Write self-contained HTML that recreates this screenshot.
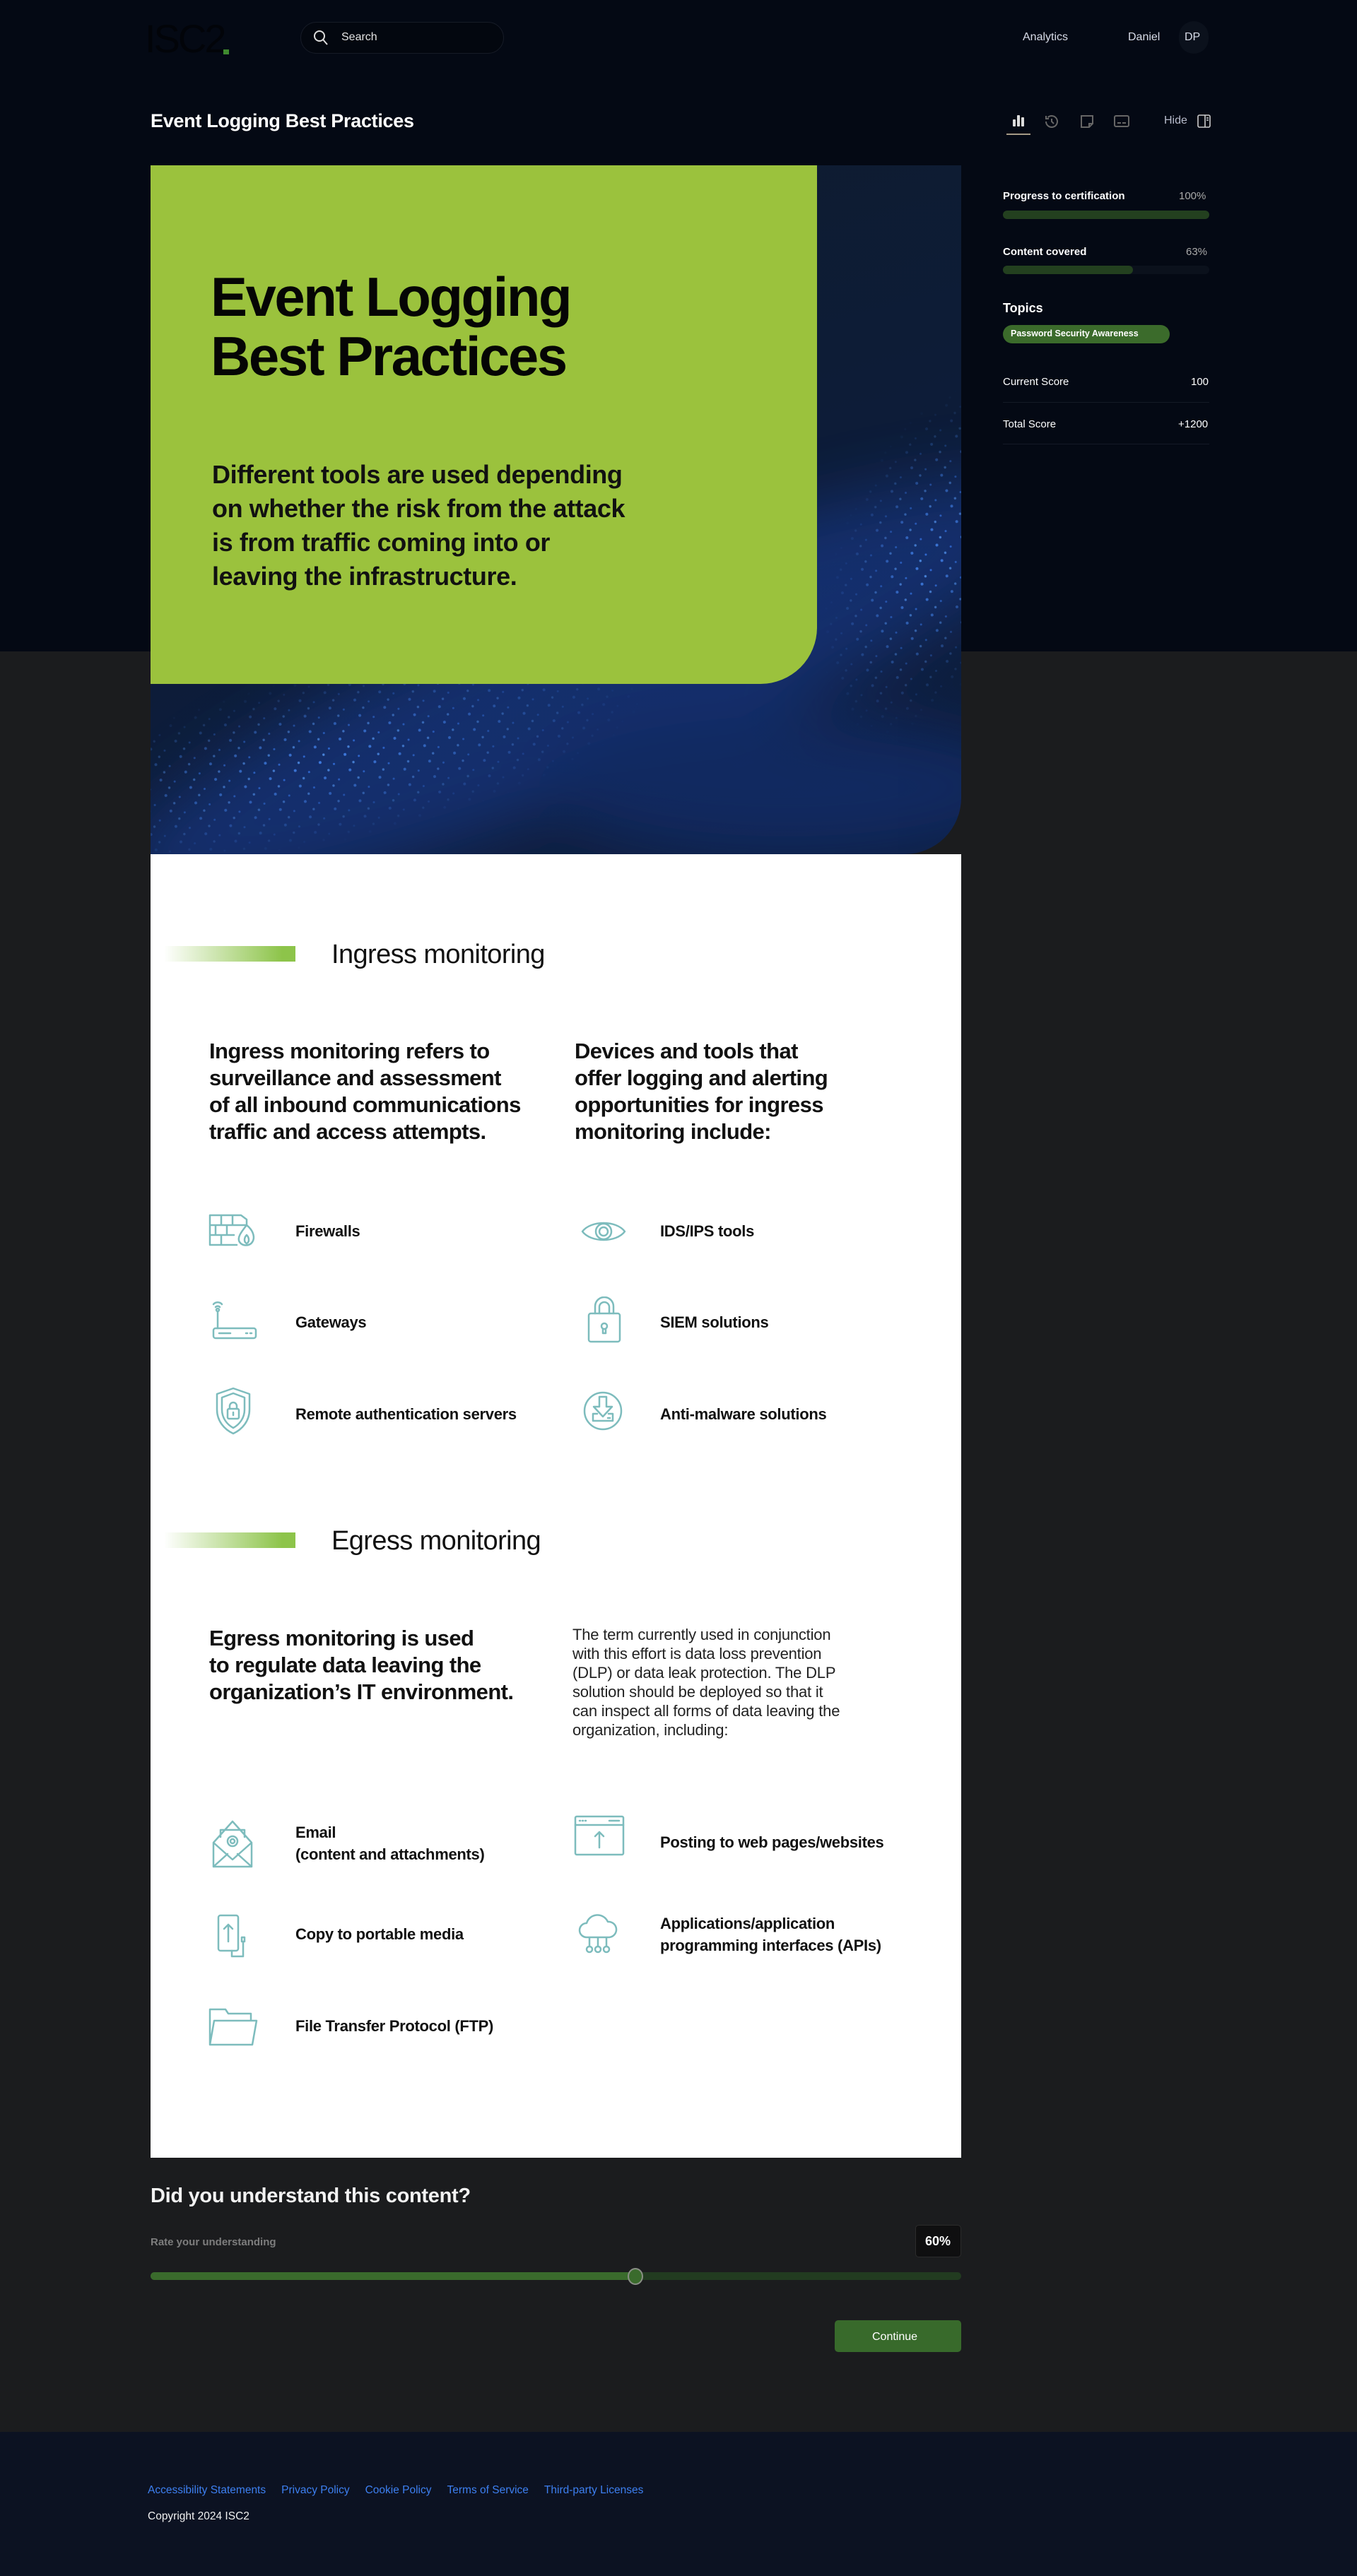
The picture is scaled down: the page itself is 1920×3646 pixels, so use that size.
<!DOCTYPE html>
<html><head><meta charset="utf-8">
<style>
*{margin:0;padding:0;box-sizing:border-box}
body{width:1920px;height:3646px;background:#1b1c1e;font-family:"Liberation Sans",sans-serif;position:relative;overflow:hidden}
.abs{position:absolute}
.top{left:0;top:0;width:1920px;height:922px;background:#040914}
.foot{left:0;top:3442px;width:1920px;height:204px;background:#0c1222}
.t{position:absolute;white-space:nowrap}
.ic{position:absolute;stroke:#7dbcbd;fill:none;stroke-width:2.5;stroke-linecap:round;stroke-linejoin:round}
.lab{position:absolute;font-weight:bold;font-size:22px;color:#111;letter-spacing:-0.3px;line-height:31px}
.para{position:absolute;font-weight:bold;font-size:31px;color:#111;line-height:38px;letter-spacing:-0.6px}
.h2{position:absolute;font-size:38px;color:#111;letter-spacing:-0.6px}
.bar{position:absolute;height:22px;width:186px;background:linear-gradient(90deg,rgba(141,196,74,0),#8dc44a 90%)}
.sb{color:#fff;font-size:15px;font-weight:bold}
</style></head><body>
<div class="abs top"></div>
<div class="abs foot"></div>

<div class="t" style="left:205px;top:22px;font-size:56px;color:#020409;letter-spacing:-3px">ISC2</div>
<div class="abs" style="left:316px;top:70px;width:8px;height:7px;background:#3f8a2f"></div>
<div class="abs" style="left:425px;top:31px;width:288px;height:45px;border:1px solid #161b26;border-radius:23px;background:#03070f"></div>
<svg class="abs" style="left:442px;top:41px" width="24" height="26" viewBox="0 0 24 26"><circle cx="10" cy="10" r="7" stroke="#ddd" stroke-width="2" fill="none"/><line x1="15" y1="15" x2="21" y2="22" stroke="#ddd" stroke-width="2"/></svg>
<div class="t" style="left:483px;top:44px;font-size:16px;color:#e3e3e3">Search</div>
<div class="t" style="left:1447px;top:44px;font-size:16px;color:#d8dce8">Analytics</div>
<div class="t" style="left:1596px;top:44px;font-size:16px;color:#d8dce8">Daniel</div>
<div class="abs" style="left:1668px;top:30px;width:42px;height:46px;border-radius:21px;background:#0b111c"></div>
<div class="t" style="left:1676px;top:44px;font-size:16px;color:#d8dce8">DP</div>

<div class="t" style="left:213px;top:156px;font-size:27px;font-weight:bold;color:#fff;letter-spacing:-0.3px">Event Logging Best Practices</div>
<svg class="abs" style="left:1430px;top:158px" width="22" height="26"><rect x="3" y="11" width="4" height="10" rx="1" fill="#ddd"/><rect x="9" y="5" width="4" height="16" rx="1" fill="#ddd"/><rect x="15" y="8" width="4" height="13" rx="1" fill="#ddd"/></svg>
<div class="abs" style="left:1424px;top:189px;width:34px;height:2px;background:#a59a86"></div>
<svg class="abs" style="left:1476px;top:160px" width="24" height="24" fill="none" stroke="#666" stroke-width="2"><path d="M4 12a8 8 0 1 0 2.5-5.8M4 4v4h4M12 8v4l3 3"/></svg>
<svg class="abs" style="left:1527px;top:161px" width="22" height="22" fill="none" stroke="#666" stroke-width="2"><path d="M3 3h16v11l-5 5H3z M14 19v-5h5"/></svg>
<svg class="abs" style="left:1575px;top:162px" width="24" height="20" fill="none" stroke="#666" stroke-width="2"><rect x="2" y="2" width="20" height="15" rx="2"/><path d="M6 12h5M13 12h5"/></svg>
<div class="t" style="left:1647px;top:162px;font-size:16px;color:#b8bccc">Hide</div>
<svg class="abs" style="left:1693px;top:161px" width="22" height="22" fill="none" stroke="#ccc" stroke-width="1.6"><rect x="2" y="2" width="17" height="17" rx="2"/><path d="M12 2v17M14 6h3M14 9h3"/></svg>

<div class="t sb" style="left:1419px;top:269px">Progress to certification</div>
<div class="t" style="left:1668px;top:269px;font-size:15px;color:#aaa">100%</div>
<div class="abs" style="left:1419px;top:298px;width:292px;height:12px;border-radius:6px;background:#23401f"></div>
<div class="t sb" style="left:1419px;top:348px">Content covered</div>
<div class="t" style="left:1678px;top:348px;font-size:15px;color:#aaa">63%</div>
<div class="abs" style="left:1419px;top:376px;width:292px;height:12px;border-radius:6px;background:#0b111c"></div>
<div class="abs" style="left:1419px;top:376px;width:184px;height:12px;border-radius:6px;background:#23401f"></div>
<div class="t" style="left:1419px;top:426px;font-size:18px;font-weight:bold;color:#fff">Topics</div>
<div class="abs" style="left:1419px;top:460px;width:236px;height:26px;border-radius:13px;background:#3b6b2b"></div>
<div class="t" style="left:1430px;top:465px;font-size:12.5px;font-weight:bold;color:#fff">Password Security Awareness</div>
<div class="t" style="left:1419px;top:532px;font-size:15px;color:#fff">Current Score</div>
<div class="t" style="left:1685px;top:532px;font-size:15px;color:#fff">100</div>
<div class="abs" style="left:1419px;top:569px;width:292px;height:1px;background:#141a26"></div>
<div class="t" style="left:1419px;top:592px;font-size:15px;color:#fff">Total Score</div>
<div class="t" style="left:1667px;top:592px;font-size:15px;color:#fff">+1200</div>
<div class="abs" style="left:1419px;top:628px;width:292px;height:1px;background:#141a26"></div>

<div class="abs" style="left:213px;top:234px;width:1147px;height:975px;border-bottom-right-radius:80px;overflow:hidden;background:linear-gradient(165deg,#0e1b2e 0%,#0d1c38 50%,#0e1e3f 100%)">
<svg width="1147" height="975" style="position:absolute;left:0;top:0">
<defs>
<filter id="bl"><feGaussianBlur stdDeviation="45"/></filter>
<pattern id="dots" width="37" height="23" patternUnits="userSpaceOnUse" patternTransform="rotate(-18)">
<circle cx="4" cy="4" r="2" fill="#4a90ff"/><circle cx="22" cy="12" r="1.5" fill="#3a7ef5"/><circle cx="12" cy="18" r="1.7" fill="#5aa0ff"/>
</pattern>
<radialGradient id="mg"><stop offset="0" stop-color="#fff" stop-opacity=".8"/><stop offset="1" stop-color="#fff" stop-opacity="0"/></radialGradient>
<mask id="m1"><ellipse cx="250" cy="840" rx="460" ry="120" transform="rotate(-12 250 840)" fill="url(#mg)"/><ellipse cx="1100" cy="560" rx="130" ry="260" transform="rotate(20 1100 560)" fill="url(#mg)"/></mask>
</defs>
<g filter="url(#bl)" opacity=".45">
<ellipse cx="620" cy="740" rx="720" ry="140" transform="rotate(-22 620 740)" fill="#1c44a8"/>
<ellipse cx="900" cy="880" rx="350" ry="100" fill="#16378a"/>
</g>
<rect width="1147" height="975" fill="url(#dots)" mask="url(#m1)"/>
</svg>
</div>
<div class="abs" style="left:213px;top:234px;width:943px;height:734px;background:#9bc23d;border-bottom-right-radius:80px"></div>
<div class="t" style="left:298px;top:378px;font-size:78px;font-weight:bold;color:#050505;line-height:84px;letter-spacing:-2.5px">Event Logging<br>Best Practices</div>
<div class="t" style="left:300px;top:648px;font-size:36px;color:#111;line-height:48px;letter-spacing:-0.4px;font-weight:bold">Different tools are used depending<br>on whether the risk from the attack<br>is from traffic coming into or<br>leaving the infrastructure.</div>

<div class="abs" style="left:213px;top:1209px;width:1147px;height:1845px;background:#fff"></div>

<div class="bar" style="left:232px;top:1339px"></div>
<div class="h2" style="left:469px;top:1330px">Ingress monitoring</div>
<div class="para" style="left:296px;top:1469px">Ingress monitoring refers to<br>surveillance and assessment<br>of all inbound communications<br>traffic and access attempts.</div>
<div class="para" style="left:813px;top:1469px">Devices and tools that<br>offer logging and alerting<br>opportunities for ingress<br>monitoring include:</div>

<svg class="ic" style="left:295px;top:1718px" width="74" height="48" viewBox="0 0 74 48"><path d="M2 2h44l8 6v8H2zM2 16h40M2 30h34M2 44h38M2 2v42M18 2v14M34 2v14M10 16v14M26 16v14M18 30v14M54 16c10 8 12 18 8 24-4 6-14 6-18 0-4-6 2-14 10-24zM54 30c4 4 4 10 0 12-4-2-4-8 0-12"/></svg>
<div class="lab" style="left:418px;top:1727px">Firewalls</div>
<svg class="ic" style="left:822px;top:1723px" width="64" height="40" viewBox="0 0 64 40"><path d="M2 20C14 4 50 4 62 20 50 36 14 36 2 20z"/><circle cx="32" cy="20" r="11"/><circle cx="32" cy="20" r="6"/></svg>
<div class="lab" style="left:934px;top:1727px">IDS/IPS tools</div>
<svg class="ic" style="left:298px;top:1838px" width="68" height="60" viewBox="0 0 68 60"><path d="M4 8a8 8 0 0 1 12 0M7 12a4 4 0 0 1 6 0"/><circle cx="10" cy="16" r="2"/><path d="M10 18v24"/><rect x="4" y="42" width="60" height="14" rx="3"/><path d="M12 49h16M50 49h2M56 49h2"/></svg>
<div class="lab" style="left:418px;top:1856px">Gateways</div>
<svg class="ic" style="left:830px;top:1835px" width="50" height="66" viewBox="0 0 50 66"><path d="M12 24V14a13 13 0 0 1 26 0v10M18 24V15a7 7 0 0 1 14 0v9"/><rect x="3" y="24" width="44" height="40" rx="3"/><circle cx="25" cy="42" r="4"/><path d="M23 46v6h4v-6"/></svg>
<div class="lab" style="left:934px;top:1856px">SIEM solutions</div>
<svg class="ic" style="left:303px;top:1962px" width="54" height="70" viewBox="0 0 54 70"><path d="M27 3l23 8v22c0 16-10 28-23 34C14 61 4 49 4 33V11z"/><path d="M27 10l16 6v17c0 12-7 21-16 26-9-5-16-14-16-26V16z"/><rect x="19" y="32" width="16" height="14" rx="2"/><path d="M22 32v-4a5 5 0 0 1 10 0v4M27 37v4"/></svg>
<div class="lab" style="left:418px;top:1986px">Remote authentication servers</div>
<svg class="ic" style="left:824px;top:1961px" width="58" height="72" viewBox="0 0 58 72"><circle cx="29" cy="36" r="26"/><path d="M24 16h10v14h8L29 44 16 30h8zM15 40h6M37 40h6M15 40v10h28V40M36 46h3"/></svg>
<div class="lab" style="left:934px;top:1986px">Anti-malware solutions</div>

<div class="bar" style="left:232px;top:2169px"></div>
<div class="h2" style="left:469px;top:2160px">Egress monitoring</div>
<div class="para" style="left:296px;top:2300px">Egress monitoring is used<br>to regulate data leaving the<br>organization’s IT environment.</div>
<div class="t" style="left:810px;top:2300px;font-size:22px;color:#222;line-height:27px;letter-spacing:-0.2px">The term currently used in conjunction<br>with this effort is data loss prevention<br>(DLP) or data leak protection. The DLP<br>solution should be deployed so that it<br>can inspect all forms of data leaving the<br>organization, including:</div>

<svg class="ic" style="left:300px;top:2576px" width="58" height="68" viewBox="0 0 58 68"><path d="M2 32l27-30 27 30v34H2zM2 32l27 24 27-24M2 66l20-18M56 66L36 48M12 24V14h34v10"/><circle cx="29" cy="30" r="7"/><circle cx="29" cy="30" r="3"/></svg>
<div class="lab" style="left:418px;top:2578px">Email<br>(content and attachments)</div>
<svg class="ic" style="left:812px;top:2569px" width="72" height="58" viewBox="0 0 72 58"><rect x="2" y="2" width="68" height="54" rx="2"/><path d="M2 14h68M8 8h1M12 8h1M16 8h1M50 8h14M36 46V24M30 30l6-6 6 6"/></svg>
<div class="lab" style="left:934px;top:2592px">Posting to web pages/websites</div>
<svg class="ic" style="left:306px;top:2708px" width="46" height="64" viewBox="0 0 46 64"><rect x="3" y="3" width="28" height="50" rx="3"/><path d="M17 40V16M11 22l6-6 6 6M22 53v8h16V40M36 34v6h4v-6z"/></svg>
<div class="lab" style="left:418px;top:2722px">Copy to portable media</div>
<svg class="ic" style="left:818px;top:2706px" width="56" height="66" viewBox="0 0 56 66"><path d="M12 36a10 10 0 0 1 0-20 16 16 0 0 1 30-2 11 11 0 0 1 2 22zM16 36v12M28 36v12M40 36v12"/><circle cx="16" cy="53" r="4"/><circle cx="28" cy="53" r="4"/><circle cx="40" cy="53" r="4"/></svg>
<div class="lab" style="left:934px;top:2707px">Applications/application<br>programming interfaces (APIs)</div>
<svg class="ic" style="left:295px;top:2840px" width="70" height="58" viewBox="0 0 70 58"><path d="M2 54V4h22l4 6h32v10M2 54l6-34h60l-6 34z"/></svg>
<div class="lab" style="left:418px;top:2852px">File Transfer Protocol (FTP)</div>

<div class="t" style="left:213px;top:3092px;font-size:29px;font-weight:bold;color:#f2f2f2;letter-spacing:-0.3px">Did you understand this content?</div>
<div class="t" style="left:213px;top:3165px;font-size:15px;font-weight:bold;color:#7d7d7d">Rate your understanding</div>
<div class="abs" style="left:1295px;top:3149px;width:65px;height:46px;border:1px solid #2c2c2c;border-radius:5px;background:#0f0f10"></div>
<div class="t" style="left:1309px;top:3162px;font-size:18px;font-weight:bold;color:#fff">60%</div>
<div class="abs" style="left:213px;top:3216px;width:1147px;height:11px;border-radius:6px;background:#223b20"></div>
<div class="abs" style="left:213px;top:3216px;width:686px;height:11px;border-radius:6px;background:#3a6b2c"></div>
<div class="abs" style="left:888px;top:3210px;width:22px;height:24px;border-radius:50%;background:#3a6b2c;border:2px solid #8a8f86"></div>
<div class="abs" style="left:1181px;top:3284px;width:179px;height:45px;border-radius:5px;background:#386a2b"></div>
<div class="t" style="left:1234px;top:3299px;font-size:16px;color:#fff">Continue</div>

<div class="t" style="left:209px;top:3516px;font-size:15.5px;color:#3d7ff0">Accessibility Statements<span style="margin-left:22px">Privacy Policy</span><span style="margin-left:22px">Cookie Policy</span><span style="margin-left:22px">Terms of Service</span><span style="margin-left:22px">Third-party Licenses</span></div>
<div class="t" style="left:209px;top:3553px;font-size:15.5px;color:#f0f0f0">Copyright 2024 ISC2</div>
</body></html>
